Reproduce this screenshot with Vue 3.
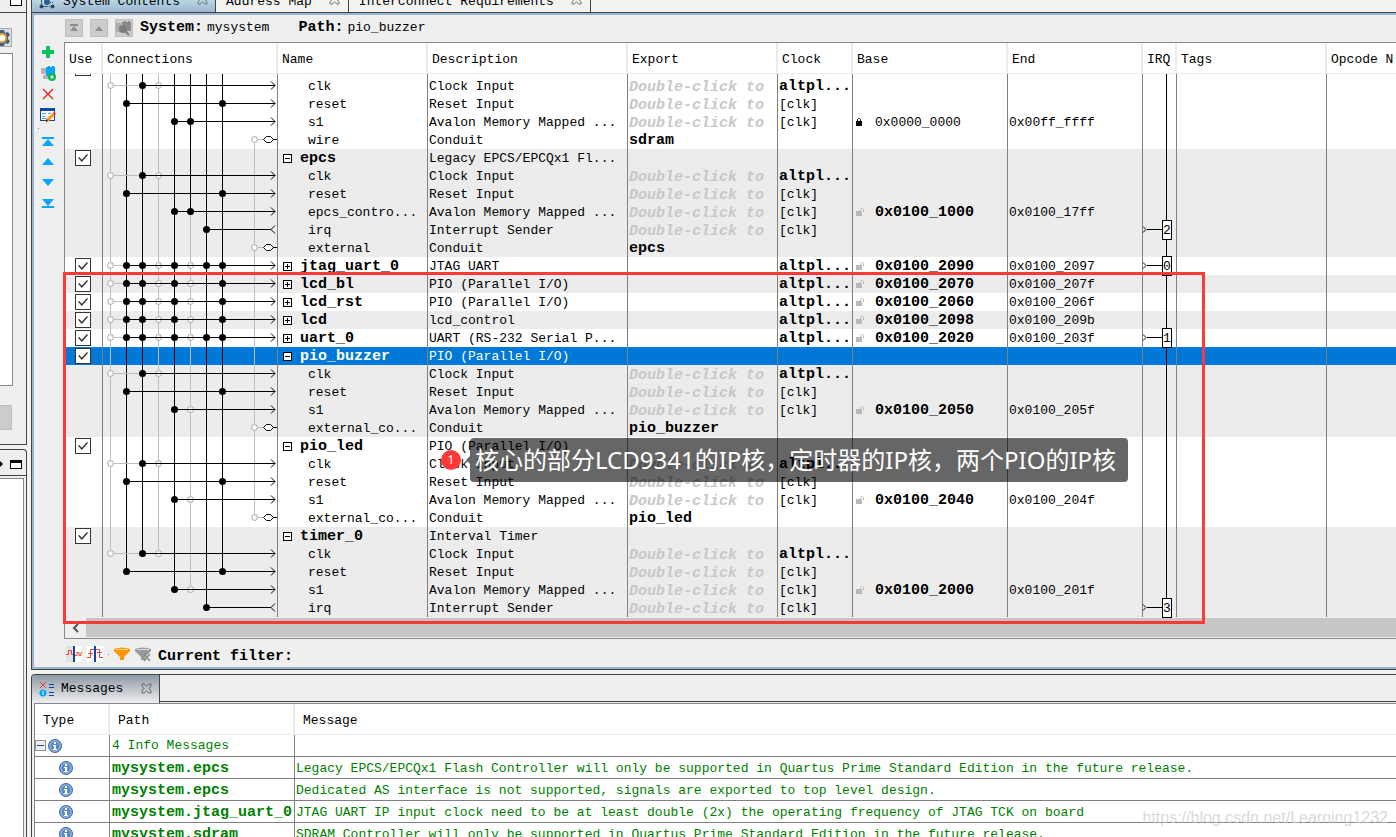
<script setup>
import { ref } from 'vue';

const AVALON = 'Avalon Memory Mapped ...';
const HINT = 'Double-click to';

// x of every bus line inside the connections cell
const X = { a: 7, b: 23, c: 39, d: 55, e: 71, f: 87, g: 103, h: 119, i: 151 };

const clk = { name: 'clk', desc: 'Clock Input', hint: true, clock: 'altpl...', strong: true, off: 'ad', on: 'c', end: 'arrow' };
const reset = { name: 'reset', desc: 'Reset Input', hint: true, clock: '[clk]', on: 'bh', end: 'arrow' };
const irq = { name: 'irq', desc: 'Interrupt Sender', hint: true, clock: '[clk]', on: 'g', end: 'sender' };
const conduit = (name, exp) => ({ name, desc: 'Conduit', exp, off: 'i', end: 'conduit' });
const slave = (name, base, last, on = 'e', off = 'f') => ({
  name, desc: AVALON, hint: true, clock: '[clk]', base, last, on, off, end: 'arrow', lock: 'open',
});
const parent = (title, desc) => ({ title, desc, open: true });
const closed = (title, desc, base, last, on = 'bceh') => ({
  title, desc, clock: 'altpl...', strong: true, base, last, on, off: 'adf', end: 'arrow', lock: 'open',
});

const groups = [
  [clk, reset, { ...slave('s1', '0x0000_0000', '0x00ff_ffff', 'ef', ''), lock: 'shut' }, conduit('wire', 'sdram')],
  [
    parent('epcs', 'Legacy EPCS/EPCQx1 Fl...'), clk, reset,
    slave('epcs_contro...', '0x0100_1000', '0x0100_17ff', 'ef', ''),
    { ...irq, irq: '2' }, conduit('external', 'epcs'),
  ],
  [{ ...closed('jtag_uart_0', 'JTAG UART', '0x0100_2090', '0x0100_2097', 'bcegh'), irq: '0' }],
  [closed('lcd_bl', 'PIO (Parallel I/O)', '0x0100_2070', '0x0100_207f')],
  [closed('lcd_rst', 'PIO (Parallel I/O)', '0x0100_2060', '0x0100_206f')],
  [closed('lcd', 'lcd_control', '0x0100_2098', '0x0100_209b')],
  [{ ...closed('uart_0', 'UART (RS-232 Serial P...', '0x0100_2020', '0x0100_203f', 'bcegh'), irq: '1' }],
  [
    { ...parent('pio_buzzer', 'PIO (Parallel I/O)'), selected: true }, clk, reset,
    slave('s1', '0x0100_2050', '0x0100_205f'), conduit('external_co...', 'pio_buzzer'),
  ],
  [
    parent('pio_led', 'PIO (Parallel I/O)'), clk, reset,
    slave('s1', '0x0100_2040', '0x0100_204f'), conduit('external_co...', 'pio_led'),
  ],
  [
    parent('timer_0', 'Interval Timer'), clk, reset,
    slave('s1', '0x0100_2000', '0x0100_201f'), { ...irq, irq: '3' },
  ],
];

// Vertical buses: first and last row that they touch
const buses = [
  { x: X.a, from: -1, to: 26 },
  { x: X.d, from: -1, to: 26 },
  { x: X.f, from: 7, to: 28 },
  { x: X.i, from: 3, to: 24 },
  { x: X.b, from: -1, to: 27, live: true },
  { x: X.c, from: -1, to: 26, live: true },
  { x: X.e, from: -1, to: 28, live: true },
  { x: X.f, from: -1, to: 7, live: true },
  { x: X.g, from: -1, to: 29, live: true },
  { x: X.h, from: -1, to: 27, live: true },
];

const rows = groups
  .flatMap((group, g) => group.map((row) => ({ ...row, shaded: g % 2 === 1 })))
  .map((row, n) => {
    const on = [...(row.on || '')].map((k) => X[k]);
    const off = [...(row.off || '')].map((k) => X[k]);
    return {
      ...row,
      on,
      off,
      use: ref(true),
      lines: buses
        .filter((b) => n >= b.from && n <= b.to)
        .map((b) => ({ x: b.x, live: b.live, y1: n === b.from ? 8 : 0, y2: n === b.to ? 8 : 18 })),
      greyFrom: Math.min(...off, ...on),
      liveFrom: Math.min(...on),
    };
  });

const messages = [
  { path: 'mysystem.epcs', text: 'Legacy EPCS/EPCQx1 Flash Controller will only be supported in Quartus Prime Standard Edition in the future release.' },
  { path: 'mysystem.epcs', text: 'Dedicated AS interface is not supported, signals are exported to top level design.' },
  { path: 'mysystem.jtag_uart_0', text: 'JTAG UART IP input clock need to be at least double (2x) the operating frequency of JTAG TCK on board' },
  { path: 'mysystem.sdram', text: 'SDRAM Controller will only be supported in Quartus Prime Standard Edition in the future release.' },
];

const columns = ['Use', 'Connections', 'Name', 'Description', 'Export', 'Clock', 'Base', 'End', 'IRQ', 'Tags', 'Opcode N'];
const tabs = ['System Contents', 'Address Map', 'Interconnect Requirements'];
</script>

<template>
  <div class="app">
    <aside class="left">
      <section class="side-pane upper">
        <header class="side-head short">
          <button class="max" aria-label="Maximize"></button>
        </header>
        <button class="gear" aria-label="Settings">
          <svg width="18" height="18" viewBox="0 0 18 18">
            <path d="M7 1h4l1 3 3-1 2 3-2 2v2l2 2-2 3-3-1-1 3H7l-1-3-3 1-2-3 2-2V8L1 6l2-3 3 1z" fill="#46607f" />
            <circle cx="9" cy="9" r="5" fill="#f0a63c" />
            <circle cx="9" cy="9" r="3" fill="#fff" />
          </svg>
        </button>
        <div class="side-box"></div>
        <button class="side-button" aria-label="Add"></button>
      </section>
      <section class="side-pane lower">
        <header class="side-head">
          <svg width="4" height="10" viewBox="0 0 4 10"><path d="M0 1l3 3-3 3z" /></svg>
          <button class="max" aria-label="Maximize"></button>
        </header>
        <div class="side-list"></div>
      </section>
    </aside>

    <main class="right">
      <section class="system">
        <nav class="tabs">
          <button v-for="(tab, i) in tabs" :key="tab" class="tab" :class="{ active: i === 0 }">
            <svg v-if="i === 0" class="tab-icon" width="16" height="16" viewBox="0 0 16 16">
              <path d="M2.500 4v8M4 11.500h4" stroke="#46607f" fill="none" />
              <circle cx="2.500" cy="11.500" r="2" fill="#33465f" /><circle cx="8" cy="7" r="3" fill="#2c5d8f" />
              <path d="M8 11.500h4M11 7.500h4" stroke="#46607f" stroke-dasharray="1 1" /><circle cx="13.500" cy="11.500" r="2" fill="#33465f" />
            </svg>
            <span>{{ tab }}</span>
            <svg class="close" width="11" height="11" viewBox="0 0 11 11">
              <path d="M1 1h2l2.500 2L8 1h2v2L8 5.500 10 8v2H8L5.500 8 3 10H1V8l2-2.500L1 3z" fill="none" stroke="#777" />
            </svg>
          </button>
        </nav>

        <div class="system-body">
          <div class="crumbs">
            <button class="crumb-btn" aria-label="Top level">
              <svg width="10" height="10" viewBox="0 0 10 10"><path d="M1 1h8v2H1zM5 3l4 5H1z" fill="#8b8b8b" /></svg>
            </button>
            <button class="crumb-btn" aria-label="Up">
              <svg width="10" height="10" viewBox="0 0 10 10"><path d="M5 3l4 5H1z" fill="#8b8b8b" /></svg>
            </button>
            <button class="crumb-btn" aria-label="Drill in">
              <svg width="16" height="16" viewBox="0 0 16 16">
                <path d="M0 3h5v9H0z" fill="#aaa" />
                <path d="M6 2h2V1h2v1h2V1h2v1h1v9H6z" fill="#8b8b8b" />
                <circle cx="7" cy="9" r="4" fill="#7d7d7d" /><path d="M9 11l4 4" stroke="#7d7d7d" stroke-width="2" />
              </svg>
            </button>
            <b class="crumb-label">System:</b><span>mysystem</span>
            <b class="crumb-label path">Path:</b><span>pio_buzzer</span>
          </div>

          <div class="work">
            <div class="tools">
              <button aria-label="Add"><svg viewBox="0 0 16 16"><path d="M6 2h4v4h4v4h-4v4H6v-4H2V6h4z" fill="#0cc45c" /></svg></button>
              <button aria-label="Add component">
                <svg viewBox="0 0 16 16">
                  <path d="M1 3h5v6H1zM3 10h8v4H3z" fill="#b5b5b5" />
                  <path d="M6 2h2V1h2v1h2V1h2v1h1v9H6z" fill="#06a4fb" />
                  <circle cx="12" cy="12" r="4" fill="#0cb84c" /><path d="M12 10v4M10 12h4" stroke="#fff" />
                </svg>
              </button>
              <button aria-label="Remove"><svg viewBox="0 0 16 16"><path d="M3 3l10 10M13 3L3 13" stroke="#e81c1c" stroke-width="1.300" /></svg></button>
              <button aria-label="Edit">
                <svg viewBox="0 0 16 16">
                  <rect x=".5" y="1.500" width="14" height="12" fill="#fff" stroke="#0d47a1" />
                  <path d="M0 1h15v3H0z" fill="#0d47a1" />
                  <path d="M2 6.500h4M2 9.500h3M2 11.500h4M8 6.500h3" stroke="#3fa9f5" />
                  <path d="M6 12l7-6 2 2-6 6-3 1z" fill="#fb9a18" /><path d="M13 6l1-1 2 2-1 1z" fill="#e81c1c" /><path d="M6 12l2 2-2 1z" fill="#222" />
                </svg>
              </button>
              <i class="sep"></i>
              <button aria-label="Move to top"><svg viewBox="0 0 16 16"><path d="M2 4h12v2H2zM8 6l6 7H2z" fill="#06a4fb" /></svg></button>
              <button aria-label="Move up"><svg viewBox="0 0 16 16"><path d="M8 4l6 7H2z" fill="#06a4fb" /></svg></button>
              <button aria-label="Move down"><svg viewBox="0 0 16 16"><path d="M2 4h12l-6 7z" fill="#06a4fb" /></svg></button>
              <button aria-label="Move to bottom"><svg viewBox="0 0 16 16"><path d="M2 3h12l-6 7zM2 10h12v2H2z" fill="#06a4fb" /></svg></button>
            </div>

            <div class="grid-wrap">
              <table class="grid">
                <colgroup>
                  <col class="w-use"><col class="w-conn"><col class="w-mid"><col class="w-desc"><col class="w-mid">
                  <col class="w-clock"><col class="w-base"><col class="w-end"><col class="w-irq"><col class="w-mid"><col>
                </colgroup>
                <thead>
                  <tr><th v-for="c in columns" :key="c" scope="col">{{ c }}</th></tr>
                </thead>
                <tbody>
                  <tr class="cut">
                    <td><div class="cut-box"></div></td>
                    <td>
                      <svg class="wires" width="174" height="3" viewBox="0 0 174 3">
                        <path
                          v-for="b in buses.filter((b) => b.from < 0)"
                          :key="b.x"
                          :d="`M${b.x} 0h1v3h-1z`"
                          :fill="b.live ? '#000' : '#bdbdbd'"
                        />
                      </svg>
                    </td>
                    <td v-for="n in 6" :key="n"></td>
                    <td><svg class="wires" width="33" height="3" viewBox="0 0 33 3"><path d="M23 0h1v3h-1z" /></svg></td>
                    <td></td><td></td>
                  </tr>
                  <tr v-for="(row, n) in rows" :key="n" :class="{ shaded: row.shaded, selected: row.selected }">
                    <td>
                      <input v-if="row.title" v-model="row.use.value" class="check" type="checkbox" :aria-label="`Use ${row.title}`">
                    </td>
                    <td>
                      <svg class="wires" width="174" height="18" viewBox="0 0 174 18">
                        <rect
                          v-for="(l, k) in row.lines" :key="k" :x="l.x" :y="l.y1" width="1" :height="l.y2 - l.y1"
                          :fill="l.live ? '#000' : '#bdbdbd'"
                        />
                        <template v-if="row.end">
                          <circle
                            v-for="x in row.off" :key="x" :cx="x + 0.5" cy="8.500" r="2.800"
                            fill="#fff" stroke="#bdbdbd" stroke-width="1.200"
                          />
                          <template v-if="row.end === 'conduit'">
                            <path d="M155 8h6v1h-6z" fill="#bdbdbd" />
                            <path d="M160.500 8.500l3-3h4l3 3-3 3h-4zM170 8.500h4" fill="#fff" stroke="#000" />
                          </template>
                          <template v-else>
                            <path v-if="row.greyFrom < row.liveFrom" :d="`M${row.greyFrom + 4} 8H${row.liveFrom}v1H${row.greyFrom + 4}z`" fill="#bdbdbd" />
                            <path :d="`M${row.liveFrom} 8H${row.end === 'arrow' ? 172 : 168}v1H${row.liveFrom}z`" />
                            <circle v-for="x in row.on" :key="x" :cx="x + 0.5" cy="8.500" r="3.500" />
                            <path v-if="row.end === 'arrow'" d="M168 4.500l4 4-4 4" fill="none" stroke="#000" />
                            <path v-else d="M172 4.500l-4 4 4 4" fill="none" stroke="#000" />
                          </template>
                        </template>
                      </svg>
                    </td>
                    <td :class="{ tight: !row.title }">
                      <div v-if="row.title" class="title">
                        <button class="toggle" :aria-label="row.open ? 'Collapse' : 'Expand'">
                          <svg width="9" height="9" viewBox="0 0 9 9">
                            <rect x=".5" y=".5" width="8" height="8" fill="#fff" stroke="#000" />
                            <path :d="row.open ? 'M2 4h5v1H2z' : 'M2 4h5v1H2zM4 2h1v5H4z'" />
                          </svg>
                        </button>
                        <b>{{ row.title }}</b>
                      </div>
                      <span v-else class="child">{{ row.name }}</span>
                    </td>
                    <td class="tight">{{ row.desc }}</td>
                    <td v-if="row.hint" class="hint">{{ HINT }}</td>
                    <td v-else class="strong">{{ row.exp }}</td>
                    <td :class="row.strong ? 'strong' : 'tight'">{{ row.clock }}</td>
                    <td>
                      <div v-if="row.base" class="base">
                        <svg v-if="row.lock === 'shut'" width="9" height="10" viewBox="0 0 9 10">
                          <path d="M1 4h6v5H1z" /><path d="M2.500 4V2.500l1-1h1l1 1V4" fill="none" stroke="#000" />
                        </svg>
                        <svg v-else width="9" height="10" viewBox="0 0 9 10">
                          <path d="M1 4h6v5H1z" fill="#b9b9b9" /><path d="M5.500 4V2.500l1-1h1l1 1V5" fill="none" stroke="#b9b9b9" />
                        </svg>
                        <span :class="{ bold: row.lock === 'open' }">{{ row.base }}</span>
                      </div>
                    </td>
                    <td class="tight">{{ row.last }}</td>
                    <td class="irq">
                      <svg class="wires" width="33" height="18" viewBox="0 0 33 18">
                        <path d="M23 0h1v18h-1z" />
                        <template v-if="row.irq">
                          <path d="M0 5.500l3 3-3 3" fill="none" stroke="#000" />
                          <path d="M4 8h15v1H4z" />
                          <rect x="19.500" y="-.5" width="9" height="19" fill="#fff" stroke="#000" />
                          <text x="20" y="13">{{ row.irq }}</text>
                        </template>
                      </svg>
                    </td>
                    <td></td>
                    <td></td>
                  </tr>
                </tbody>
              </table>
              <div class="scroll">
                <button aria-label="Scroll left">
                  <svg width="8" height="10" viewBox="0 0 8 10"><path d="M6 1L2 5l4 4" fill="none" stroke="#555" stroke-width="2" /></svg>
                </button>
                <div class="thumb"></div>
              </div>
            </div>
          </div>

          <div class="filter">
            <button aria-label="Show clock connections">
              <svg viewBox="0 0 16 16"><path d="M0 0h16v16H0z" fill="#e3e3dd" /><path d="M9 0h7v16H9z" fill="#fff" /><path d="M0 8.500h2.500v-4h3v4H8M9 9.500h2v-3h2v3h2v-3h1" fill="none" stroke="#e8473f" /><path d="M7 0h2v16H7z" fill="#0d47a1" /></svg>
            </button>
            <button aria-label="Show reset connections">
              <svg viewBox="0 0 16 16"><path d="M0 0h16v16H0z" fill="#fff" /><path d="M0 11.500h3.500v-8h9v8H16M1 7.500h5M10 6.500h5" fill="none" stroke="#e8473f" /><path d="M7 0h2v16H7z" fill="#0d47a1" /></svg>
            </button>
            <i class="dot"></i>
            <button aria-label="Filter">
              <svg viewBox="0 0 16 16"><path d="M0 3q8-3 16 0v2l-6 6v3H6v-3L0 5z" fill="#fb9500" /><path d="M2 3.500h12" stroke="#ffd79a" /></svg>
            </button>
            <button aria-label="Clear filter">
              <svg viewBox="0 0 16 16"><path d="M0 3q8-3 16 0v2l-6 6v3H6v-3L0 5z" fill="#999" /><path d="M2 3.500h12" stroke="#ddd" /><path d="M9 8l6 7M15 8l-6 7" stroke="#8a8a8a" stroke-width="1.500" /></svg>
            </button>
            <b>Current filter:</b>
          </div>
        </div>
      </section>

      <section class="log">
        <nav class="log-tabs">
          <button class="log-tab">
            <svg width="16" height="16" viewBox="0 0 16 16">
              <path d="M1 1l6 6M7 1L1 7" stroke="#e8372f" /><circle cx="4" cy="12" r="3.500" fill="#06a4fb" /><path d="M4 10v4" stroke="#fff" />
              <path d="M10 3.500h5M10 6.500h5M10 11.500h5M10 14.500h5" stroke="#0d47a1" />
            </svg>
            <span>Messages</span>
            <svg class="close" width="11" height="11" viewBox="0 0 11 11">
              <path d="M1 1h2l2.500 2L8 1h2v2L8 5.500 10 8v2H8L5.500 8 3 10H1V8l2-2.500L1 3z" fill="none" stroke="#666" />
            </svg>
          </button>
        </nav>
        <table class="log-grid">
          <colgroup><col class="w-type"><col class="w-path"><col></colgroup>
          <thead>
            <tr><th scope="col">Type</th><th scope="col">Path</th><th scope="col">Message</th></tr>
          </thead>
          <tbody>
            <tr>
              <td>
                <div class="root">
                  <button class="toggle" aria-label="Collapse messages">
                    <svg width="11" height="11" viewBox="0 0 11 11"><rect x=".5" y=".5" width="10" height="10" fill="#eee" stroke="#919191" /><path d="M2 5h7v1H2z" fill="#2a4a8a" /></svg>
                  </button>
                  <svg width="14" height="14" viewBox="0 0 14 14"><circle cx="7" cy="7" r="6.500" fill="#5a8cc8" stroke="#41699c" /><circle cx="7" cy="7" r="5.200" fill="none" stroke="#a5c3e4" /><path d="M6 3h2v2H6zM5 6h3v4h1v1H5v-1h1V7H5z" fill="#fff" /></svg>
                </div>
              </td>
              <td class="path-cell">4 Info Messages</td>
              <td></td>
            </tr>
            <tr v-for="(m, i) in messages" :key="i">
              <td>
                <div class="leaf">
                  <svg width="14" height="14" viewBox="0 0 14 14"><circle cx="7" cy="7" r="6.500" fill="#5a8cc8" stroke="#41699c" /><circle cx="7" cy="7" r="5.200" fill="none" stroke="#a5c3e4" /><path d="M6 3h2v2H6zM5 6h3v4h1v1H5v-1h1V7H5z" fill="#fff" /></svg>
                </div>
              </td>
              <td class="path-cell bold">{{ m.path }}</td>
              <td class="text-cell">{{ m.text }}</td>
            </tr>
          </tbody>
        </table>
      </section>
    </main>

    <!-- Annotations over the window -->
    <div class="frame"></div>
    <span class="pin">1</span>
    <div class="note">核心的部分LCD9341的IP核，定时器的IP核，两个PIO的IP核</div>
    <div class="watermark">https://blog.csdn.net/Learning1232</div>
  </div>
</template>

<style>
html,
body,
#app {
  height: 100%;
}

body {
  overflow: hidden;
}
</style>

<style scoped>
.app {
  position: relative;
  display: flex;
  gap: 4px;
  height: 100%;
  overflow: hidden;
  background: #f3f3f0;
  color: #000;
  font: 13px/18px "Liberation Mono", "Noto Sans CJK SC", monospace;
  white-space: pre;
}

.app * {
  box-sizing: border-box;
}

button {
  display: flex;
  align-items: center;
  justify-content: center;
  padding: 0;
  border: 0;
  background: none;
  color: inherit;
  font: inherit;
}

b,
.bold {
  font-size: 15px;
  font-weight: 700;
}

/* --- Left strip --- */
.left {
  display: flex;
  flex: 0 0 27px;
  flex-direction: column;
  gap: 4px;
}

.side-pane {
  display: flex;
  flex-direction: column;
  border-right: 1px solid #444;
  background: #efefef;
}

.upper {
  height: 445px;
  border-bottom: 1px solid #444;
}

.lower {
  flex: 1;
  border-top: 1px solid #444;
  border-top-right-radius: 4px;
}

.side-head {
  display: flex;
  align-items: center;
  justify-content: space-between;
  height: 26px;
  padding-right: 4px;
  padding-top: 4px;
  border-bottom: 1px solid #444;
}

.side-head.short {
  align-items: flex-end;
  justify-content: flex-end;
  height: 13px;
  padding-bottom: 6px;
}

.max {
  width: 12px;
  height: 9px;
  border: 1px solid #000;
  border-top-width: 3px;
  background: #fff;
}

.gear {
  width: 12px;
  height: 19px;
  margin: 15px 0 6px;
  border: 1px solid #aaa;
  border-left: 0;
  background: #ddd;
  justify-content: flex-end;
  overflow: hidden;
}

.gear svg {
  flex: none;
}

.side-box {
  width: 13px;
  height: 333px;
  border: 1px solid #828790;
  border-left: 0;
  background: #fff;
}

.side-button {
  width: 12px;
  height: 25px;
  margin-top: 19px;
  border: 1px solid #bfbfbf;
  border-left: 0;
  background: #ccc;
}

.side-list {
  flex: 1;
  margin: 2px 2px 0 0;
  border: 1px solid #828790;
  border-width: 1px 1px 0 0;
  background: #fff;
}

/* --- System pane --- */
.right {
  display: flex;
  flex: 1;
  flex-direction: column;
  gap: 4px;
  min-width: 0;
}

.system {
  border-bottom: 1px solid #444;
  border-left: 1px solid #444;
}

.tabs {
  display: flex;
  height: 13px;
  overflow: hidden;
  border-bottom: 1px solid #444;
}

.tab {
  align-items: flex-end;
  justify-content: flex-start;
  height: 12px;
  padding: 0 8px 1px 10px;
  border-right: 1px solid #444;
}

.tab.active {
  height: 13px;
  padding-right: 7px;
  padding-bottom: 2px;
  padding-left: 7px;
  background: linear-gradient(#b9d6e2, #99b4d1);
}

.tab-icon {
  margin-right: 8px;
}

.close {
  margin: 0 0 6px 17px;
}

.system-body {
  border: 2px solid #99b4d1;
  border-right: 0;
  background: #efefef;
}

.crumbs {
  display: flex;
  align-items: center;
  height: 27px;
  padding: 0 0 2px 31px;
}

.crumb-btn {
  width: 18px;
  height: 18px;
  margin-right: 7px;
  border: 1px solid #bfbfbf;
  background: #ccc;
}

.crumb-label {
  margin-right: 4px;
}

.crumb-label.path {
  margin-left: 29px;
}

.work {
  display: flex;
}

.tools {
  display: flex;
  flex: 0 0 30px;
  flex-direction: column;
  align-items: center;
  gap: 5px;
  padding: 2px 2px 0 0;
}

.tools button,
.tools svg,
.filter button,
.filter svg {
  width: 16px;
  height: 16px;
}

.sep,
.dot {
  width: 1px;
  height: 1px;
  background: #888;
}

.sep {
  margin: 0 20px -1px 0;
}

.grid-wrap {
  flex: 1;
  min-width: 0;
  overflow: hidden;
  border: 1px solid #828790;
  border-right: 0;
}

table {
  width: 100%;
  border-spacing: 0;
  table-layout: fixed;
  background: #fff;
}

th {
  height: 31px;
  padding: 3px 0 0 4px;
  overflow: hidden;
  border-right: 2px solid #ebebeb;
  border-bottom: 1px solid #ebebeb;
  font-weight: 400;
  text-align: left;
}

th:last-child {
  border-right: 0;
}

td {
  height: 18px;
  padding: 0;
  overflow: hidden;
  border-right: 1px solid #808080;
}

td:last-child {
  border-right: 0;
}

.w-use { width: 38px; }
.w-conn { width: 175px; }
.w-mid { width: 150px; }
.w-desc { width: 200px; }
.w-clock { width: 75px; }
.w-base { width: 155px; }
.w-end { width: 135px; }
.w-irq { width: 34px; }
.w-type { width: 75px; }
.w-path { width: 185px; }

.cut td {
  height: 3px;
}

.cut-box {
  width: 16px;
  height: 2px;
  margin: 0 0 1px 10px;
  border: 1px solid #333;
  border-top: 0;
}

.shaded {
  background: #ececec;
}

.selected {
  background: #0078d7;
  color: #fff;
}

.check {
  display: block;
  width: 16px;
  height: 16px;
  margin: 1px 0 1px 10px;
  padding: 2px;
  border: 1px solid #333;
  appearance: none;
  background: #fff;
}

.check:checked::before {
  display: block;
  width: 10px;
  height: 10px;
  background: #333;
  clip-path: polygon(0 48%, 12% 40%, 38% 68%, 90% 10%, 100% 20%, 38% 90%);
  content: "";
}

.wires {
  display: block;
  overflow: visible;
}

.title {
  display: flex;
  align-items: center;
  gap: 8px;
  height: 18px;
  padding-left: 5px;
}

.title b,
.base span {
  padding-top: 2px;
  line-height: 16px;
}

.child {
  padding-left: 29px;
}

.tight {
  padding: 2px 0 0 1px;
  line-height: 16px;
}

.strong {
  padding: 2px 0 0 1px;
  font-size: 15px;
  font-weight: 700;
  line-height: 16px;
}

.hint {
  padding: 4px 0 0 1px;
  color: #c8c8c8;
  font-size: 15px;
  font-style: italic;
  font-weight: 700;
  line-height: 14px;
}

.base {
  display: flex;
  align-items: center;
  gap: 11px;
  height: 18px;
  padding-left: 2px;
}

.irq {
  overflow: visible;
}

.scroll {
  display: flex;
  height: 21px;
  padding: 1px 0;
}

.scroll button {
  width: 21px;
}

.thumb {
  flex: 1;
  background: #c6c6c6;
}

.filter {
  display: flex;
  align-items: center;
  gap: 5px;
  height: 28px;
  padding: 2px 0 0 32px;
}

.filter b {
  padding: 6px 0 0 2px;
}

.dot {
  margin: 0;
}

/* --- Messages pane --- */
.log {
  flex: 1;
  min-height: 0;
  overflow: hidden;
  border-top: 1px solid #444;
  border-left: 1px solid #444;
  border-top-left-radius: 4px;
  background: #efefef;
}

.log-tabs {
  display: flex;
  height: 28px;
  background: linear-gradient(#444, #444) 0 26px / 100% 1px no-repeat;
}

.log-tab {
  height: 28px;
  padding: 0 7px;
  border-right: 1px solid #444;
  background: linear-gradient(#8d99a6, #efefef);
}

.log-tab span {
  padding-left: 6px;
}

.log-tab .close {
  margin-bottom: 2px;
  margin-left: 18px;
}

.log-grid {
  width: calc(100% - 2px);
  margin-left: 2px;
  border-top: 1px solid #828790;
  border-left: 1px solid #828790;
}

.log-grid th {
  padding-left: 8px;
}

.log-grid td {
  height: 22px;
  border-bottom: 1px solid #808080;
  color: #008000;
}

.log-grid .path-cell {
  padding-left: 2px;
}

.log-grid .path-cell.bold {
  padding-top: 3px;
}

.log-grid .text-cell {
  padding: 3px 0 0 1px;
}

.root {
  display: flex;
  align-items: center;
  gap: 2px;
}

.leaf {
  display: flex;
  padding-left: 24px;
}

/* --- Annotations --- */
.frame {
  position: absolute;
  top: 272px;
  left: 63px;
  width: 1142px;
  height: 352px;
  border: 3px solid #ff3838;
}

.pin {
  position: absolute;
  top: 450px;
  left: 441px;
  width: 20px;
  height: 20px;
  border-radius: 50%;
  background: #ff3838;
  color: #fff;
  font: 12px/20px "Noto Sans", sans-serif;
  text-align: center;
}

.note {
  position: absolute;
  top: 438px;
  left: 470px;
  height: 44px;
  padding: 0 12px 0 5px;
  border-radius: 4px;
  background: rgba(0, 0, 0, 0.6);
  color: #fff;
  font: 24px/44px "Noto Sans", "Noto Sans CJK SC", sans-serif;
}

.note::before {
  position: absolute;
  top: 18px;
  left: -4px;
  border: 4px solid transparent;
  border-left: 0;
  border-right-color: rgba(0, 0, 0, 0.6);
  content: "";
}

.watermark {
  position: absolute;
  right: 8px;
  bottom: 9px;
  color: rgba(200, 200, 200, 0.7);
  font: 16px/20px "Liberation Sans", sans-serif;
}
</style>
